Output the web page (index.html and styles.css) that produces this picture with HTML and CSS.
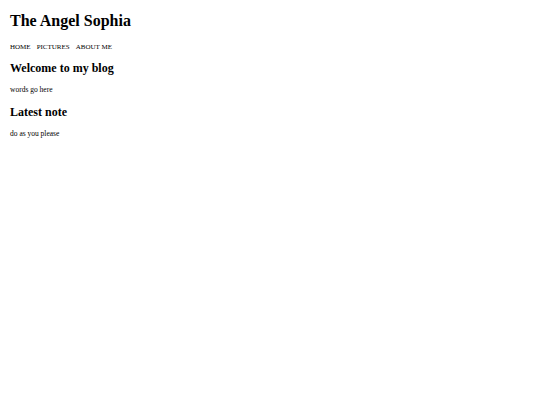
FILE: index.html
```html
<!DOCTYPE html>
<html>
<head>
<meta charset="utf-8">
<link rel="stylesheet" href="styles.css">
</head>
<body>
<header class="site-header">
<h1 class="site-title">The Angel Sophia</h1>
<nav class="nav">
<a class="nav-link" href="#">HOME</a>
<a class="nav-link" href="#">PICTURES</a>
<a class="nav-link" href="#">ABOUT ME</a>
</nav>
</header>
<main class="content">
<section class="post">
<h2 class="post-title">Welcome to my blog</h2>
<p class="post-body">words go here</p>
</section>
<section class="post">
<h2 class="post-title">Latest note</h2>
<p class="post-body">do as you please</p>
</section>
</main>
</body>
</html>
```

FILE: styles.css
```css
html, body {
  margin: 0;
  padding: 0;
  background: #ffffff;
}
body {
  padding: 11px 10px;
  font-family: "Liberation Serif", "Times New Roman", serif;
  color: #000000;
}
.site-title {
  margin: 0;
  font-size: 16px;
  line-height: 20px;
  font-weight: bold;
}
.nav {
  display: flex;
  gap: 6px;
  margin-top: 11px;
}
.nav-link {
  font-size: 7px;
  line-height: 10px;
  color: #000000;
  text-decoration: none;
}
.content {
  display: flex;
  flex-direction: column;
  gap: 0;
  padding-top: 8px;
}
.post-title {
  margin: 0;
  font-size: 12px;
  line-height: 16px;
  font-weight: bold;
}
.post-body {
  margin: 9px 0 9px;
  font-size: 7.5px;
  line-height: 10px;
}
```
